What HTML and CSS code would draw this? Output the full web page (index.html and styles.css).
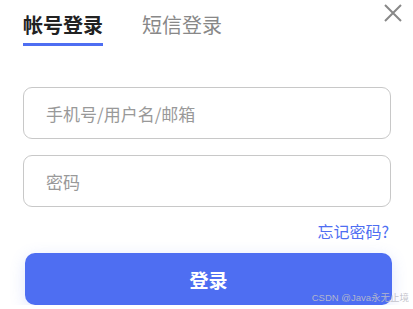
FILE: index.html
```html
<!DOCTYPE html>
<html lang="zh-CN">
<head>
  <meta charset="UTF-8">
  <meta name="viewport" content="width=device-width, initial-scale=1.0">
  <title>登录</title>
  <link rel="stylesheet" href="styles.css">
</head>
<body>

  <div class="login-box">
    <!-- Tabs -->
    <div class="login-header">
      <div class="tabs">
        <span class="tab active">帐号登录</span>
        <span class="tab">短信登录</span>
      </div>
      <button class="close-btn" aria-label="关闭">
        <svg width="18" height="18" viewBox="0 0 18 18">
          <path d="M1 1 L17 17 M17 1 L1 17" stroke="#888" stroke-width="2" fill="none"/>
        </svg>
      </button>
    </div>

    <!-- Form -->
    <form class="login-form">
      <input type="text" class="field" placeholder="手机号/用户名/邮箱">
      <input type="password" class="field" placeholder="密码">
      <a href="#" class="forget">忘记密码?</a>
      <button type="button" class="submit-btn">登录</button>
    </form>
  </div>

  <div class="watermark">CSDN @Java永无止境</div>

</body>
</html>
```

FILE: styles.css
```css
/* Page */
body {
  margin: 0;
  background: #fff;
  font-family: "Noto Sans CJK SC", "Noto Sans", sans-serif;
  color: #222;
}

.login-box {
  padding: 0 21px 0 23px;
}

/* Header with tabs */
.login-header {
  display: flex;
  align-items: flex-start;
}

.tabs {
  display: flex;
  gap: 39px;
  padding-top: 11px;
}

.tab {
  font-size: 20px;
  line-height: 28px;
  color: #888;
  padding-bottom: 4px;
  border-bottom: 3px solid transparent;
}

.tab.active {
  color: #222;
  font-weight: bold;
  border-bottom-color: #4e6ef2;
}

.close-btn {
  margin-left: auto;
  margin-right: -10px;
  margin-top: 4px;
  padding: 0;
  border: none;
  background: none;
  width: 18px;
  height: 18px;
  cursor: pointer;
}

/* Form */
.login-form {
  display: flex;
  flex-direction: column;
  margin-top: 41px;
}

.field {
  width: 368px;
  height: 52px;
  box-sizing: border-box;
  border: 1px solid #c8c8c8;
  border-radius: 9px;
  padding: 0 22px;
  font-family: inherit;
  font-size: 17px;
  outline: none;
  margin-bottom: 16px;
}

.field::placeholder {
  color: #999;
}

.forget {
  align-self: flex-end;
  margin-right: 3px;
  margin-top: -2px;
  font-size: 16px;
  line-height: 20px;
  color: #4e6ef2;
  text-decoration: none;
}

.submit-btn {
  margin-top: 12px;
  margin-left: 2px;
  width: 367px;
  height: 52px;
  border: none;
  border-radius: 10px;
  background: #4e6ef2;
  color: #fff;
  font-family: inherit;
  font-size: 19px;
  font-weight: bold;
  box-shadow: 0 4px 16px rgba(78, 110, 242, 0.18);
  cursor: pointer;
}

.watermark {
  position: absolute;
  right: 4px;
  bottom: 5px;
  font-family: "Liberation Sans", "Noto Sans CJK SC", sans-serif;
  font-size: 9.5px;
  color: rgba(190, 190, 200, 0.9);
}
```
